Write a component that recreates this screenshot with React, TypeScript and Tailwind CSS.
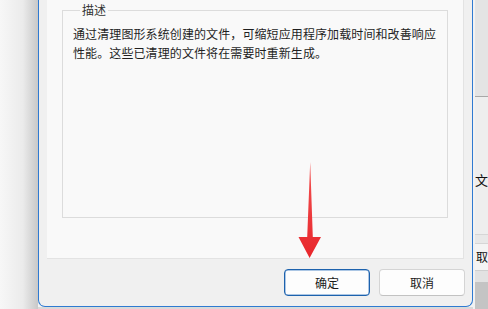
import React from 'react';

const FONT = { fontFamily: '"Noto Sans CJK SC", "Noto Sans", sans-serif' };

function DownArrow() {
  return (
    <svg
      className="absolute left-[296px] top-[160px]"
      width="28"
      height="100"
      viewBox="0 0 28 100"
    >
      <defs>
        <linearGradient id="arrowRed" x1="0" y1="0" x2="0" y2="1">
          <stop offset="0" stopColor="#f25252" />
          <stop offset="1" stopColor="#e8262b" />
        </linearGradient>
      </defs>
      <path
        d="M14.2 2 L16.8 77 L25 77 L13.6 98 L2.5 77 L11.2 77 Z"
        fill="url(#arrowRed)"
      />
    </svg>
  );
}

function DialogButton({ label, primary }: { label: string; primary?: boolean }) {
  return (
    <button
      className={`w-[86px] h-[27px] rounded-[4px] bg-[#fdfdfd] text-[12px] text-[#1b1b1b] flex items-center justify-center ${
        primary
          ? 'border border-[#1d62ad] shadow-[inset_0_0_0_0.5px_#5a8fcc]'
          : 'border border-[#d4d4d4] border-b-[#c2c2c2]'
      }`}
    >
      {label}
    </button>
  );
}

export default function App() {
  return (
    <div className="relative w-[488px] h-[309px] flex overflow-hidden bg-[#f3f3f3]" style={FONT}>
      {/* backdrop + window shadow on the left */}
      <div className="w-[38px] h-full bg-linear-to-r from-[#f7f7f7] via-[#ebebeb] via-60% to-[#c8c8c8]" />

      {/* the dialog */}
      <div className="w-[435px] flex flex-col">
        <div className="h-[307px] flex flex-col bg-[#f0f0f0] border-x border-b border-[#2f7ad1] rounded-b-[7px] overflow-hidden">
          {/* content panel */}
          <div className="mx-[8px] h-[259px] bg-[#f9f9f9] border-b border-r border-[#e3e3e3] px-[15px] pt-[2px]">
            <fieldset className="h-[216px] border border-[#dcdcdc] pl-[10px] pt-[6px]">
              <legend className="ml-[7px] px-[2px] text-[12px] leading-[16px] text-[#333]">描述</legend>
              <p className="text-[12px] leading-[19px] text-[#1f1f1f] tracking-[0.1px]">
                通过清理图形系统创建的文件，可缩短应用程序加载时间和改善响应
                <br />
                性能。这些已清理的文件将在需要时重新生成。
              </p>
            </fieldset>
          </div>

          {/* footer buttons */}
          <div className="flex-1 flex justify-end gap-[9px] pt-[10px] pr-[7px]">
            <DialogButton label="确定" primary />
            <DialogButton label="取消" />
          </div>
        </div>
        <div className="flex-1 bg-[#d9d9d9]" />
      </div>

      {/* part of the window behind */}
      <div className="flex-1 flex flex-col border-l-2 border-[#f2f2f2]">
        <div className="h-[97px] bg-[#e4e4e4] border-b border-[#a8a8a8]" />
        <div className="h-[137px] bg-[#eeeeee] flex items-end pb-[47px] pl-[0px]">
          <span className="text-[13px] leading-[14px] text-[#111]">文</span>
        </div>
        <div className="h-[10px] bg-[#e8e8e8] border-t border-b border-[#d6d6d6]" />
        <div className="h-[27px] bg-[#f4f4f4] border-b border-[#cfcfcf] flex items-center pl-[1px]">
          <span className="text-[12px] leading-[14px] text-[#111]">取</span>
        </div>
        <div className="h-[11px] bg-[#e2e2e2]" />
        <div className="flex-1 bg-[#c4c4c4]" />
      </div>

      <DownArrow />
    </div>
  );
}
